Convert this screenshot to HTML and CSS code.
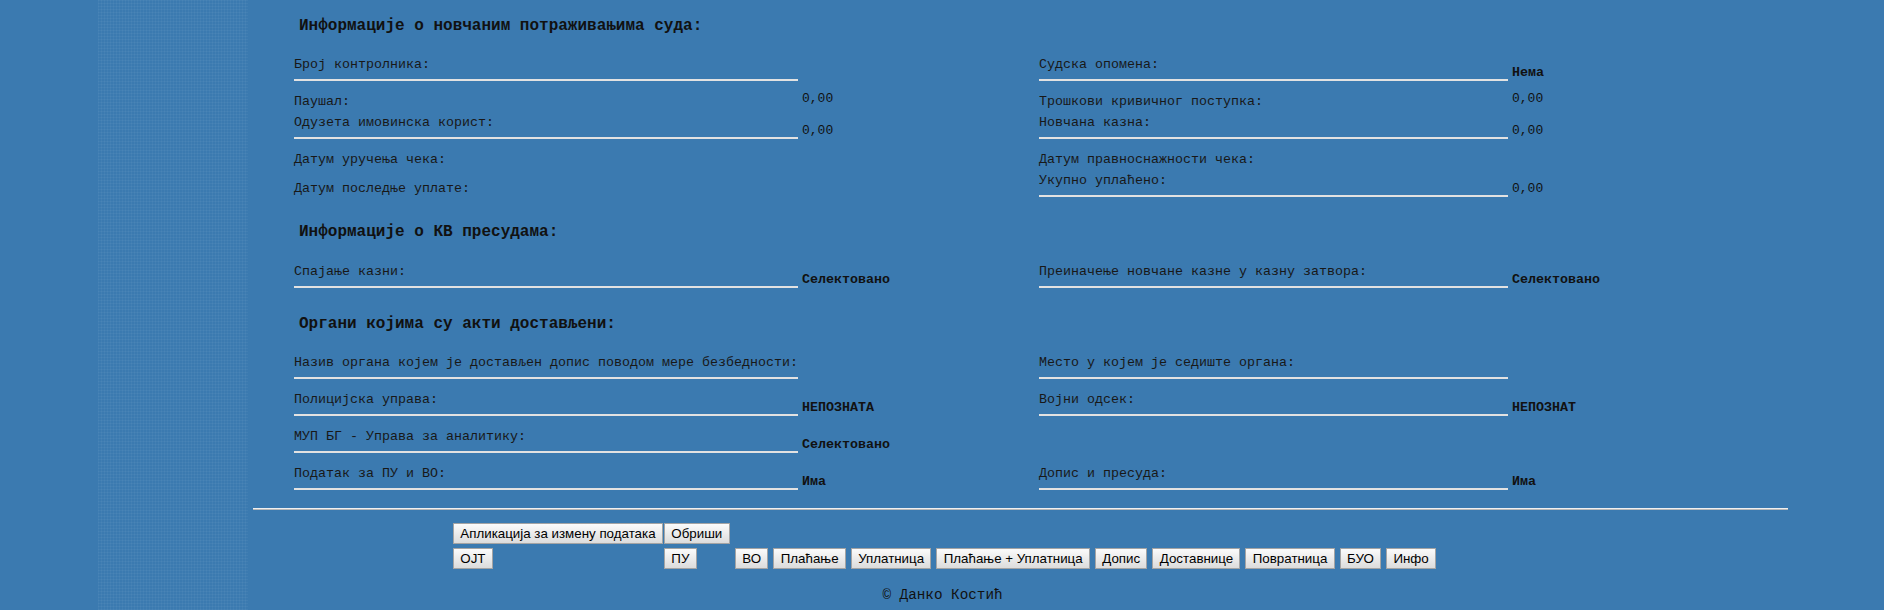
FILE: index.html
```html
<!DOCTYPE html>
<html lang="sr">
<head>
<meta charset="utf-8">
<title>Информације</title>
<link rel="stylesheet" href="styles.css">
</head>
<body>
<div class="page">
  <div class="gutter"></div>
  <div class="stripe"></div>
  <main class="content">
    <h2 class="title t1">Информације о новчаним потраживањима суда:</h2>
    <div class="cols">
      <div class="col left">
        <div class="field u pt21"><div class="lbl">Број контролника:</div></div>
        <div class="field plain pt13"><div class="lbl">Паушал:</div><div class="val num">0,00</div></div>
        <div class="field u pt5"><div class="lbl">Одузета имовинска корист:</div><div class="val num">0,00</div></div>
        <div class="field plain pt13"><div class="lbl">Датум уручења чека:</div></div>
        <div class="field plain pt13"><div class="lbl">Датум последње уплате:</div></div>
      </div>
      <div class="col right">
        <div class="field u pt21"><div class="lbl">Судска опомена:</div><div class="val strong">Нема</div></div>
        <div class="field plain pt13"><div class="lbl">Трошкови кривичног поступка:</div><div class="val num">0,00</div></div>
        <div class="field u pt5"><div class="lbl">Новчана казна:</div><div class="val num">0,00</div></div>
        <div class="field plain pt13"><div class="lbl">Датум правноснажности чека:</div></div>
        <div class="field u pt5"><div class="lbl">Укупно уплаћено:</div><div class="val num">0,00</div></div>
      </div>
    </div>

    <h2 class="title t2">Информације о КВ пресудама:</h2>
    <div class="cols">
      <div class="col left">
        <div class="field u pt22"><div class="lbl">Спајање казни:</div><div class="val strong">Селектовано</div></div>
      </div>
      <div class="col right">
        <div class="field u pt22"><div class="lbl">Преиначење новчане казне у казну затвора:</div><div class="val strong">Селектовано</div></div>
      </div>
    </div>

    <h2 class="title t3">Органи којима су акти достављени:</h2>
    <div class="cols">
      <div class="col left">
        <div class="field u pt21"><div class="lbl">Назив органа којем је достављен допис поводом мере безбедности:</div></div>
        <div class="field u pt13"><div class="lbl">Полицијска управа:</div><div class="val strong">НЕПОЗНАТА</div></div>
        <div class="field u pt13"><div class="lbl">МУП БГ - Управа за аналитику:</div><div class="val strong">Селектовано</div></div>
        <div class="field u pt13"><div class="lbl">Податак за ПУ и ВО:</div><div class="val strong">Има</div></div>
      </div>
      <div class="col right">
        <div class="field u pt21"><div class="lbl">Место у којем је седиште органа:</div></div>
        <div class="field u pt13"><div class="lbl">Војни одсек:</div><div class="val strong">НЕПОЗНАТ</div></div>
        <div class="field u pt13 blank"><div class="lbl">&nbsp;</div></div>
        <div class="field u pt13"><div class="lbl">Допис и пресуда:</div><div class="val strong">Има</div></div>
      </div>
    </div>

    <div class="rule"></div>

    <div class="actions">
      <div class="cell"><button class="btn">Апликација за измену података</button></div>
      <div class="cell"><button class="btn">Обриши</button></div>
      <div class="cell"></div>
      <div class="cell"><button class="btn">OJT</button></div>
      <div class="cell"><button class="btn">ПУ</button></div>
      <div class="cell group">
        <button class="btn">ВО</button>
        <button class="btn">Плаћање</button>
        <button class="btn">Уплатница</button>
        <button class="btn">Плаћање + Уплатница</button>
        <button class="btn">Допис</button>
        <button class="btn">Доставнице</button>
        <button class="btn">Повратница</button>
        <button class="btn">БУО</button>
        <button class="btn">Инфо</button>
      </div>
    </div>

    <footer class="footer">© Данко Костић</footer>
  </main>
</div>
</body>
</html>
```

FILE: styles.css
```css
html, body {
  margin: 0;
  padding: 0;
}

body {
  background: #3b7ab0;
  color: #111;
  font-family: "Liberation Mono", "Courier New", monospace;
  font-size: 13.333px;
}

.page {
  display: flex;
  min-height: 610px;
}

.gutter {
  width: 98px;
  flex: none;
}

.stripe {
  width: 150px;
  flex: none;
  background-color: #3b7ab0;
  background-image:
    linear-gradient(90deg, rgba(255, 255, 255, 0.035) 1px, transparent 1px),
    linear-gradient(rgba(255, 255, 255, 0.035) 1px, transparent 1px);
  background-size: 3px 3px;
}

.content {
  width: 1535px;
  flex: none;
  padding-left: 5px;
}

.title {
  margin: 0;
  padding-left: 46px;
  font-family: "Liberation Mono", "Courier New", monospace;
  font-size: 16px;
  font-weight: bold;
  line-height: 20px;
  color: #111;
}

.t1 { margin-top: 16px; }
.t2 { margin-top: 25px; }
.t3 { margin-top: 26px; }

.cols {
  display: flex;
  padding-left: 41px;
}

.col.left {
  width: 745px;
  flex: none;
}

.col.right {
  flex: 1;
}

.field {
  display: flex;
}

.field.u {
  align-items: flex-end;
}

.field.plain {
  align-items: flex-start;
}

.lbl {
  line-height: 16px;
  white-space: pre;
  color: #181818;
}

.left .lbl { width: 504px; }
.right .lbl { width: 469px; }

.field.u .lbl {
  padding-bottom: 6px;
  border-bottom: 2px solid #e2e2e2;
}

.field.blank .lbl {
  border-bottom-color: transparent;
}

.val {
  padding-left: 4px;
  line-height: 16px;
  white-space: nowrap;
}

.field.u .val {
  padding-bottom: 0;
}

.field.plain .val {
  margin-top: -3px;
}

.num {
  font-size: 13px;
  color: #111;
}

.strong {
  font-weight: bold;
  color: #111;
}

.pt5 { padding-top: 5px; }
.pt13 { padding-top: 13px; }
.pt21 { padding-top: 21px; }
.pt22 { padding-top: 22px; }

.rule {
  margin-top: 18px;
  height: 0;
  border-top: 1px solid #f0f0f0;
  border-bottom: 1px solid #b9b9b9;
}

.actions {
  display: grid;
  grid-template-columns: 211px 71px auto;
  row-gap: 4px;
  margin-top: 13px;
  padding-left: 200px;
}

.cell {
  display: flex;
}

.group {
  gap: 5px;
}

.btn {
  height: 21px;
  margin: 0;
  padding: 0 6.3px;
  font-family: "Liberation Sans", Arial, sans-serif;
  font-size: 13.333px;
  line-height: 19px;
  color: #000;
  background: linear-gradient(#fbfbfb, #dcdcdc);
  border: 1px solid #a4a4a4;
  border-radius: 0;
}

.footer {
  margin-top: 18px;
  padding-right: 156px;
  text-align: center;
  line-height: 16px;
  font-size: 14.3px;
  color: #111;
}
```
